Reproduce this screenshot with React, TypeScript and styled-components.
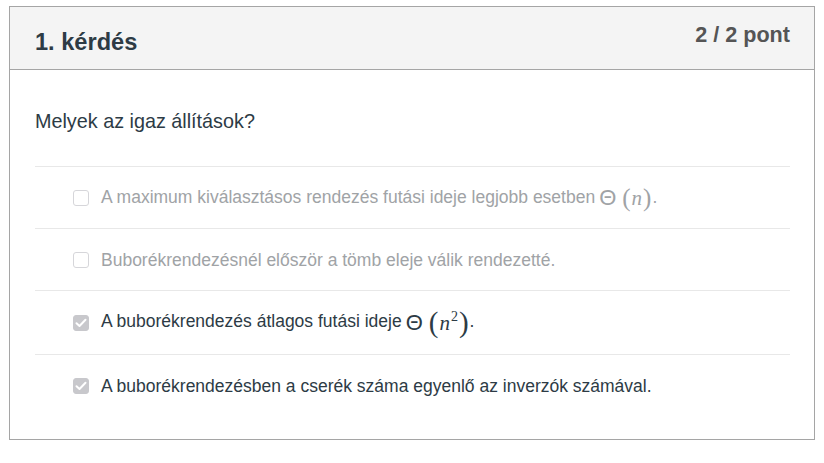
import React from "react";
import styled, { createGlobalStyle } from "styled-components";

const Global = createGlobalStyle`
  html, body { margin: 0; padding: 0; background: #fff; }
  body { font-family: "Liberation Sans", Arial, sans-serif; }
`;

const Card = styled.section`
  margin: 6px 0 0 9px;
  width: 806px;
  height: 434px;
  box-sizing: border-box;
  border: 1px solid #a5a5a5;
  background: #fff;
  display: flex;
  flex-direction: column;
`;

const Header = styled.header`
  height: 63px;
  box-sizing: border-box;
  background: #f4f4f4;
  border-bottom: 1px solid #a5a5a5;
  display: flex;
  justify-content: space-between;
  align-items: flex-start;
  padding: 0 24px 0 25px;
`;

const Title = styled.h2`
  margin: 0;
  padding-top: 20px;
  font-size: 23.6px;
  line-height: 30px;
  font-weight: 700;
  color: #2d3b45;
`;

const Points = styled.div`
  padding-top: 13px;
  font-size: 21.6px;
  line-height: 30px;
  font-weight: 700;
  color: #555;
`;

const Body = styled.div`
  padding: 37px 24px 0 25px;
`;

const Question = styled.p`
  margin: 0 0 31px;
  font-size: 19.8px;
  line-height: 28px;
  color: #2d3b45;
`;

const List = styled.ul`
  list-style: none;
  margin: 0;
  padding: 0;
`;

const Row = styled.li<{ $tall?: boolean }>`
  border-top: 1px solid #e8e8e8;
  display: flex;
  align-items: center;
  gap: 12px;
  padding: 0 0 0 38px;
  height: ${(p) => (p.$tall ? 63 : 61)}px;
`;

const Box = styled.span<{ $checked?: boolean }>`
  flex: none;
  width: 16px;
  height: 16px;
  box-sizing: border-box;
  border-radius: 3px;
  border: 1px solid ${(p) => (p.$checked ? "#c8c8cc" : "#d6d6da")};
  background: ${(p) => (p.$checked ? "#c8c8cc" : "#fff")};
  display: flex;
  align-items: center;
  justify-content: center;
`;

const Label = styled.span<{ $dim?: boolean }>`
  font-size: 17.5px;
  line-height: 24px;
  color: ${(p) => (p.$dim ? "#a0a3a6" : "#2d3b45")};
  white-space: nowrap;
`;

const Math = styled.span`
  font-size: 18px;
  margin-left: 4px;
  display: inline-flex;
  align-items: center;
  vertical-align: middle;
`;

const Theta = styled.span`
  font-family: "Liberation Sans", Arial, sans-serif;
  font-size: 22px;
  margin-right: 5px;
`;

const Paren = styled.span<{ $big?: boolean }>`
  font-family: "Liberation Serif", serif;
  font-size: ${(p) => (p.$big ? "29px" : "25px")};
  line-height: 1;
  margin: 0 1px;
`;

const Var = styled.span`
  font-family: "Liberation Serif", serif;
  font-style: italic;
  font-size: 21px;
`;

const Sup = styled.span`
  font-family: "Liberation Serif", serif;
  font-size: 14px;
  align-self: flex-start;
  margin: 2px 0 0 1px;
  line-height: 1;
`;

const Check = () => (
  <svg width="12" height="10" viewBox="0 0 12 10">
    <path d="M1.5 5.2 L4.5 8 L10.5 1.8" fill="none" stroke="#fff" strokeWidth="2" strokeLinecap="round" strokeLinejoin="round" />
  </svg>
);

export default function App() {
  return (
    <>
      <Global />
      <Card>
        <Header>
          <Title>1. kérdés</Title>
          <Points>2 / 2 pont</Points>
        </Header>
        <Body>
          <Question>Melyek az igaz állítások?</Question>
          <List>
            <Row>
              <Box />
              <Label $dim>
                A maximum kiválasztásos rendezés futási ideje legjobb esetben
                <Math>
                  <Theta>Θ</Theta>
                  <Paren>(</Paren>
                  <Var>n</Var>
                  <Paren>)</Paren>
                </Math>
                .
              </Label>
            </Row>
            <Row>
              <Box />
              <Label $dim>Buborékrendezésnél először a tömb eleje válik rendezetté.</Label>
            </Row>
            <Row $tall>
              <Box $checked>
                <Check />
              </Box>
              <Label>
                A buborékrendezés átlagos futási ideje
                <Math>
                  <Theta>Θ</Theta>
                  <Paren $big>(</Paren>
                  <Var>n</Var>
                  <Sup>2</Sup>
                  <Paren $big>)</Paren>
                </Math>
                .
              </Label>
            </Row>
            <Row>
              <Box $checked>
                <Check />
              </Box>
              <Label>A buborékrendezésben a cserék száma egyenlő az inverzók számával.</Label>
            </Row>
          </List>
        </Body>
      </Card>
    </>
  );
}
